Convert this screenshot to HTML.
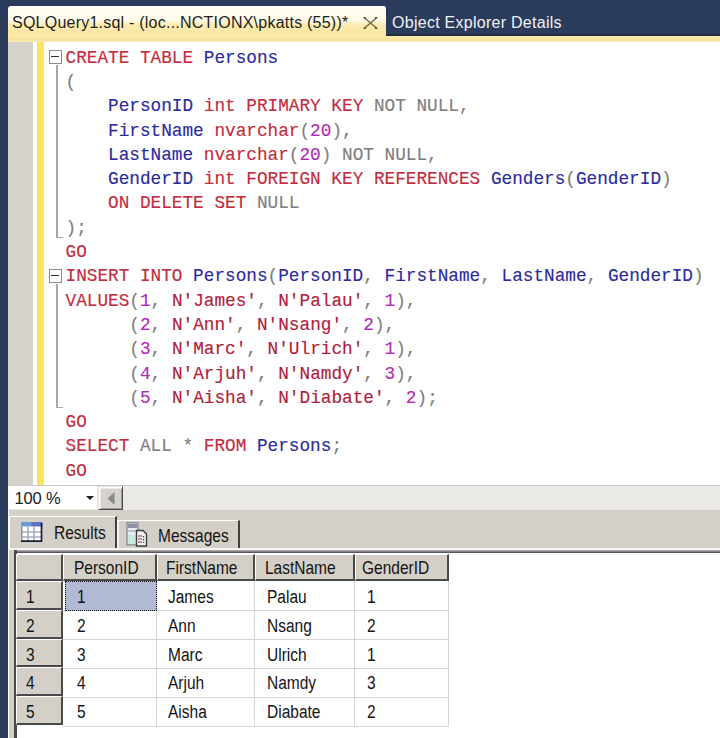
<!DOCTYPE html>
<html><head><meta charset="utf-8">
<style>
*{margin:0;padding:0;box-sizing:border-box}
html,body{width:720px;height:738px;overflow:hidden;background:#2b3b5b;font-family:"Liberation Sans",sans-serif}
.abs{position:absolute}
#tab{left:7.5px;top:6px;width:378px;height:31px;border-radius:3px 2px 0 0;background:linear-gradient(#fffef6 0%,#fffbea 46%,#fdebb2 60%,#fbe49e 100%)}
#tabtxt{left:12px;top:14px;font-size:16px;color:#1e1e1e;white-space:nowrap;letter-spacing:0.23px}
#otab{left:392px;top:14px;font-size:16px;color:#f0f2f6;white-space:nowrap;letter-spacing:0.27px}
#ystrip{left:8px;top:35.5px;width:712px;height:6.5px;background:linear-gradient(#f9edc4 0%,#f7e39e 30%,#f7e39e 80%,#fbf2d2 100%)}
#editor{left:8px;top:42px;width:712px;height:443px;background:#fff}
#margin{left:8px;top:42px;width:25px;height:443px;background:#d5d2cb}
#ybar{left:37px;top:42px;width:7px;height:443px;background:#fbe55c}
#code{left:65.5px;top:45.7px;font-family:"Liberation Mono",monospace;font-size:17.73px;line-height:24.3px;white-space:pre;color:#2e2e98;-webkit-text-stroke:0.15px currentColor}
.k{color:#c22c3e}.g{color:#808080}.n{color:#b02cb4}.s{color:#b0203c}.i{color:#2b2b9e;-webkit-text-stroke:0.15px currentColor}
.box{width:13.8px;height:13.8px;border:1.5px solid #8c8c8c;background:#fff}
.box:after{content:"";position:absolute;left:1.6px;top:4.6px;width:7.5px;height:1.9px;background:#303030}
.vl{width:2px;background:#a8a8a8}
#hsb{left:8px;top:484.5px;width:712px;height:25.5px;background:#ebe9e5;border-top:1.5px solid #cacaca}
#zoom{left:8px;top:486px;width:89px;height:23px;background:#fff}
#zoomtxt{left:14.5px;top:489.3px;font-size:16.5px;color:#1a1a1a;word-spacing:0.3px;letter-spacing:-0.2px}
#sbtn{left:97.5px;top:486px;width:25.5px;height:24px;background:#d6d3cc;border:1.5px solid #e4e2dc;border-right:1.8px solid #4a4a4a;border-bottom:1.8px solid #4a4a4a;box-shadow:inset 1.5px 1.5px 0 #fff,inset -1px -1px 0 #9a9a9a}
#gpanel{left:8px;top:510px;width:712px;height:228px;background:#d4d0c8;border-left:1px solid #fff}
#grid{left:14px;top:553px;width:706px;height:185px;background:#fff}
.tabr{background:#d4d0c8;border-top:1px solid #fff;border-left:1px solid #fff;border-right:2px solid #404040}
.tabm{background:#d4d0c8;border-top:1px solid #fff;border-left:2px solid #f4f4f4;border-right:2px solid #404040}
.uit{font-size:15.5px;color:#141414;white-space:nowrap;transform:scaleY(1.15);transform-origin:0 0}
.hc{background:#d4d0c8;border-top:1.5px solid #fff;border-left:1.5px solid #fff;border-right:2px solid #4a4a4a;border-bottom:2px solid #4a4a4a}
.gt{font-size:15.5px;color:#141414;white-space:nowrap;transform:scaleY(1.15);transform-origin:0 0}
</style></head><body>
<div class="abs" id="tab"></div>
<div class="abs" id="tabtxt">SQLQuery1.sql - (loc...NCTIONX\pkatts (55))*</div>
<svg class="abs" style="left:362px;top:16px" width="17" height="14" viewBox="0 0 17 14"><path d="M2 1.5L8.5 7L15 1.5M2 12.5L8.5 7L15 12.5" stroke="#7a6e48" stroke-width="1.5" fill="none"/><path d="M1 1H4.2L3.5 3.2ZM16 1H12.8L13.5 3.2ZM1 13H4.2L3.5 10.8ZM16 13H12.8L13.5 10.8Z" fill="#5e5434"/></svg>
<div class="abs" id="otab">Object Explorer Details</div>
<div class="abs" style="left:386px;top:34px;width:334px;height:1.5px;background:#252c3c"></div>
<div class="abs" id="ystrip"></div>
<div class="abs" id="editor"></div>
<div class="abs" id="margin"></div>
<div class="abs" id="ybar"></div>
<div class="abs box" style="left:48.5px;top:50px"></div>
<div class="abs vl" style="left:56px;top:65px;height:173px"></div>
<div class="abs" style="left:56px;top:236.5px;width:6.5px;height:1.8px;background:#a8a8a8"></div>
<div class="abs box" style="left:48.5px;top:269px"></div>
<div class="abs vl" style="left:56px;top:284px;height:124px"></div>
<div class="abs" style="left:56px;top:406.5px;width:6.5px;height:1.8px;background:#a8a8a8"></div>
<div class="abs" id="code"><span class="k">CREATE TABLE</span> <span class="i">Persons</span>
<span class="g">(</span>
    <span class="i">PersonID</span> <span class="k">int PRIMARY KEY</span> <span class="g">NOT NULL,</span>
    <span class="i">FirstName</span> <span class="k">nvarchar</span><span class="g">(</span><span class="n">20</span><span class="g">),</span>
    <span class="i">LastName</span> <span class="k">nvarchar</span><span class="g">(</span><span class="n">20</span><span class="g">) NOT NULL,</span>
    <span class="i">GenderID</span> <span class="k">int FOREIGN KEY REFERENCES</span> <span class="i">Genders</span><span class="g">(</span><span class="i">GenderID</span><span class="g">)</span>
    <span class="k">ON DELETE SET</span> <span class="g">NULL</span>
<span class="g">);</span>
<span class="k">GO</span>
<span class="k">INSERT INTO</span> <span class="i">Persons</span><span class="g">(</span><span class="i">PersonID</span><span class="g">,</span> <span class="i">FirstName</span><span class="g">,</span> <span class="i">LastName</span><span class="g">,</span> <span class="i">GenderID</span><span class="g">)</span>
<span class="k">VALUES</span><span class="g">(</span><span class="n">1</span><span class="g">,</span> <span class="s">N'James'</span><span class="g">,</span> <span class="s">N'Palau'</span><span class="g">,</span> <span class="n">1</span><span class="g">),</span>
      <span class="g">(</span><span class="n">2</span><span class="g">,</span> <span class="s">N'Ann'</span><span class="g">,</span> <span class="s">N'Nsang'</span><span class="g">,</span> <span class="n">2</span><span class="g">),</span>
      <span class="g">(</span><span class="n">3</span><span class="g">,</span> <span class="s">N'Marc'</span><span class="g">,</span> <span class="s">N'Ulrich'</span><span class="g">,</span> <span class="n">1</span><span class="g">),</span>
      <span class="g">(</span><span class="n">4</span><span class="g">,</span> <span class="s">N'Arjuh'</span><span class="g">,</span> <span class="s">N'Namdy'</span><span class="g">,</span> <span class="n">3</span><span class="g">),</span>
      <span class="g">(</span><span class="n">5</span><span class="g">,</span> <span class="s">N'Aisha'</span><span class="g">,</span> <span class="s">N'Diabate'</span><span class="g">,</span> <span class="n">2</span><span class="g">);</span>
<span class="k">GO</span>
<span class="k">SELECT</span> <span class="g">ALL *</span> <span class="k">FROM</span> <span class="i">Persons</span><span class="g">;</span>
<span class="k">GO</span></div>
<div class="abs" id="hsb"></div>
<div class="abs" id="zoom"></div>
<div class="abs" id="zoomtxt">100 %</div>
<svg class="abs" style="left:86px;top:496px" width="8" height="5"><path d="M0 0H8L4 4Z" fill="#202020"/></svg>
<div class="abs" id="sbtn"></div>
<svg class="abs" style="left:107px;top:491.5px" width="8" height="13"><path d="M7.5 0V13L0.5 6.5Z" fill="#8a8a8a"/></svg>
<div class="abs" id="gpanel"></div>
<div class="abs tabr" style="left:9px;top:516px;width:108px;height:34px"></div>
<div class="abs tabm" style="left:117px;top:520px;width:123px;height:29px"></div>
<div class="abs" style="left:8px;top:548px;width:712px;height:2px;background:#f6f5f3"></div>
<div class="abs" style="left:14px;top:550px;width:706px;height:4px;background:linear-gradient(#c4c1bb,#5a5a5a 60%,#3c3c3c)"></div>
<div class="abs" id="grid"></div>
<div class="abs" style="left:14px;top:550px;width:2.5px;height:188px;background:#4a4a4a"></div>
<svg class="abs" style="left:21px;top:522px" width="22" height="20" viewBox="0 0 22 20">
<rect x="0.5" y="0" width="21" height="5" fill="#5b72c4"/>
<rect x="0.5" y="0" width="10" height="5" fill="#6c9ad8"/>
<rect x="0.5" y="4.5" width="20" height="15" fill="#fff"/>
<path d="M7 5V19M13 5V19M1 10H20M1 15H20" stroke="#a9aec0" stroke-width="1.6"/>
<path d="M0.8 4.5V19" stroke="#9096a8" stroke-width="1.5"/>
<path d="M20.5 1V20M0 19.2H21" stroke="#1c1c34" stroke-width="1.7"/>
</svg>
<svg class="abs" style="left:126px;top:522px" width="22" height="25" viewBox="0 0 22 25">
<rect x="1" y="0.8" width="11" height="22" fill="#e4eef0" stroke="#8a8e96" stroke-width="1.4"/>
<rect x="2" y="2" width="9" height="4" fill="#8d93a0"/>
<rect x="2" y="8" width="9" height="2" fill="#b8c0c8"/>
<rect x="2" y="13" width="9" height="9" fill="#c8e8dc"/>
<path d="M10.5 8.5H17L20.5 12V24H10.5Z" fill="#f4f0f2" stroke="#3a3c40" stroke-width="1.4"/>
<path d="M12 14H16M12 17H16M12 20H16" stroke="#a07888" stroke-width="1.6"/>
<path d="M17.5 14V21" stroke="#404040" stroke-width="1.2" stroke-dasharray="1.5 1.5"/>
</svg>
<div class="abs uit" style="left:54px;top:523px">Results</div>
<div class="abs uit" style="left:158px;top:526px">Messages</div>
<div class="abs" style="left:156px;top:581px;width:1px;height:145px;background:#d6d6d6"></div>
<div class="abs" style="left:254px;top:581px;width:1px;height:145px;background:#d6d6d6"></div>
<div class="abs" style="left:354px;top:581px;width:1px;height:145px;background:#d6d6d6"></div>
<div class="abs" style="left:448px;top:581px;width:1px;height:145px;background:#d6d6d6"></div>
<div class="abs" style="left:63px;top:610.3px;width:386px;height:1px;background:#d6d6d6"></div>
<div class="abs" style="left:63px;top:639.1px;width:386px;height:1px;background:#d6d6d6"></div>
<div class="abs" style="left:63px;top:667.9px;width:386px;height:1px;background:#d6d6d6"></div>
<div class="abs" style="left:63px;top:696.7px;width:386px;height:1px;background:#d6d6d6"></div>
<div class="abs" style="left:63px;top:725.5px;width:386px;height:1px;background:#d6d6d6"></div>
<div class="abs" style="left:65px;top:581px;width:92px;height:30.3px;background:#b1b9d5;border:1.6px dotted #111"></div>
<div class="abs hc" style="left:16px;top:554px;width:47px;height:27px"></div>
<div class="abs hc" style="left:63px;top:554px;width:94px;height:27px"></div>
<div class="abs hc" style="left:157px;top:554px;width:98px;height:27px"></div>
<div class="abs hc" style="left:255px;top:554px;width:100px;height:27px"></div>
<div class="abs hc" style="left:355px;top:554px;width:94px;height:27px"></div>
<div class="abs hc" style="left:16px;top:581.0px;width:47px;height:28.8px"></div>
<div class="abs hc" style="left:16px;top:609.8px;width:47px;height:28.8px"></div>
<div class="abs hc" style="left:16px;top:638.6px;width:47px;height:28.8px"></div>
<div class="abs hc" style="left:16px;top:667.4px;width:47px;height:28.8px"></div>
<div class="abs hc" style="left:16px;top:696.2px;width:47px;height:28.8px"></div>
<div class="abs gt" style="left:74px;top:558px">PersonID</div>
<div class="abs gt" style="left:166px;top:558px">FirstName</div>
<div class="abs gt" style="left:265px;top:558px">LastName</div>
<div class="abs gt" style="left:362px;top:558px">GenderID</div>
<div class="abs gt" style="left:26px;top:587.0px">1</div>
<div class="abs gt" style="left:77px;top:587.0px">1</div>
<div class="abs gt" style="left:168px;top:587.0px">James</div>
<div class="abs gt" style="left:267px;top:587.0px">Palau</div>
<div class="abs gt" style="left:367px;top:587.0px">1</div>
<div class="abs gt" style="left:26px;top:615.8px">2</div>
<div class="abs gt" style="left:77px;top:615.8px">2</div>
<div class="abs gt" style="left:168px;top:615.8px">Ann</div>
<div class="abs gt" style="left:267px;top:615.8px">Nsang</div>
<div class="abs gt" style="left:367px;top:615.8px">2</div>
<div class="abs gt" style="left:26px;top:644.6px">3</div>
<div class="abs gt" style="left:77px;top:644.6px">3</div>
<div class="abs gt" style="left:168px;top:644.6px">Marc</div>
<div class="abs gt" style="left:267px;top:644.6px">Ulrich</div>
<div class="abs gt" style="left:367px;top:644.6px">1</div>
<div class="abs gt" style="left:26px;top:673.4px">4</div>
<div class="abs gt" style="left:77px;top:673.4px">4</div>
<div class="abs gt" style="left:168px;top:673.4px">Arjuh</div>
<div class="abs gt" style="left:267px;top:673.4px">Namdy</div>
<div class="abs gt" style="left:367px;top:673.4px">3</div>
<div class="abs gt" style="left:26px;top:702.2px">5</div>
<div class="abs gt" style="left:77px;top:702.2px">5</div>
<div class="abs gt" style="left:168px;top:702.2px">Aisha</div>
<div class="abs gt" style="left:267px;top:702.2px">Diabate</div>
<div class="abs gt" style="left:367px;top:702.2px">2</div>
</body></html>
